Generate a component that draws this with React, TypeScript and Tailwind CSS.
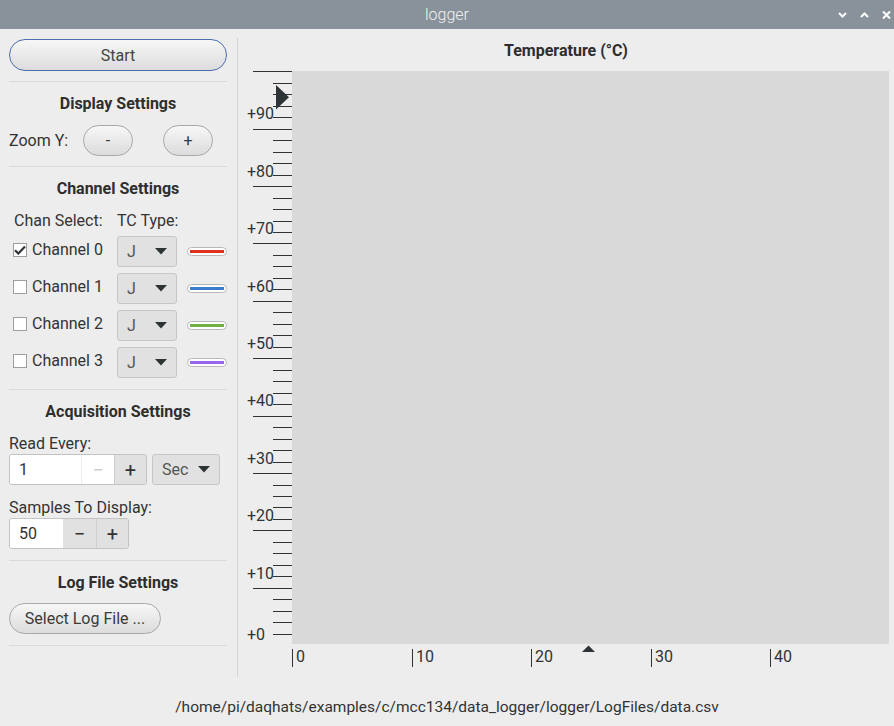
import React from "react";

const FONT = { fontFamily: "Roboto, 'Noto Sans', sans-serif" };

const Separator: React.FC<{ className?: string }> = ({ className = "" }) => (
  <div className={`h-px bg-[#d9d9d9] ${className}`} />
);

// leading 22 puts Roboto glyphs where GTK draws them
const SectionTitle: React.FC<{ children: React.ReactNode; className?: string }> = ({
  children,
  className = "",
}) => (
  <div className={`text-center text-[16px] leading-[22px] font-bold text-[#2e2e2e] ${className}`}>
    {children}
  </div>
);

const PillButton: React.FC<{ children: React.ReactNode; className?: string }> = ({
  children,
  className = "",
}) => (
  <button
    type="button"
    className={`h-[31px] rounded-full border border-[#a9a9a9] bg-gradient-to-b from-[#f7f7f7] to-[#dcdcdc] text-[16px] leading-[20px] text-[#3a3a3a] ${className}`}
  >
    {children}
  </button>
);

const Caret = () => (
  <svg width="12" height="7" viewBox="0 0 12 7">
    <path d="M0 0 L12 0 L6 6.5 Z" fill="#2e3436" />
  </svg>
);

const Combo: React.FC<{ value: string; className?: string }> = ({ value, className = "" }) => (
  <div
    className={`flex h-[31px] items-center justify-between rounded-[3px] border border-[#c6c6c6] bg-[#e1e1e1] pl-[9px] pr-[9px] text-[16px] text-[#555] ${className}`}
  >
    <span>{value}</span>
    <Caret />
  </div>
);

const channels = [
  { name: "Channel 0", color: "bg-[#e0301e]", checked: true },
  { name: "Channel 1", color: "bg-[#3b7dcc]", checked: false },
  { name: "Channel 2", color: "bg-[#72b043]", checked: false },
  { name: "Channel 3", color: "bg-[#9a66ee]", checked: false },
];

function ChannelRow({ name, color, checked }: { name: string; color: string; checked: boolean }) {
  return (
    <div className="flex h-[31px] items-center">
      <div className="flex h-[27px] items-center self-start">
        <div className="ml-[4px] flex h-[14px] w-[14px] items-center justify-center border border-[#9e9e9e] bg-white">
          {checked && (
            <svg width="12" height="10" viewBox="0 0 12 10">
              <path d="M1 5.2 L4.3 8.5 L11 1.5" fill="none" stroke="#2e3436" strokeWidth="2.2" />
            </svg>
          )}
        </div>
        <span className="ml-[5px] w-[85px] text-[16px] leading-[20px] text-[#333]">{name}</span>
      </div>
      <Combo value="J" className="w-[60px]" />
      <div className="ml-[10px] flex h-[9px] w-[40px] items-center rounded-full border border-[#b8b8b8] bg-white px-[2px]">
        <div className={`h-[3px] w-full ${color}`} />
      </div>
    </div>
  );
}

function LeftPanel() {
  return (
    <div className="flex w-[237px] flex-col pl-[9px] pr-[10px] pt-[10px] text-[#333]">
      <button
        type="button"
        className="h-[32px] w-[218px] rounded-full border border-[#4b6eaf] bg-gradient-to-b from-[#f7f7f7] to-[#dcdcdc] pt-[2px] text-[16px] text-[#444]"
      >
        Start
      </button>
      <Separator className="mt-[10px]" />
      <SectionTitle className="mt-[11px]">Display Settings</SectionTitle>
      <div className="mt-[10px] flex items-center">
        <span className="w-[74px] text-[16px] leading-[20px]">Zoom Y:</span>
        <PillButton className="w-[50px]">-</PillButton>
        <PillButton className="ml-[30px] w-[50px]">+</PillButton>
      </div>
      <Separator className="mt-[10px]" />
      <SectionTitle className="mt-[11px]">Channel Settings</SectionTitle>
      <div className="mt-[10px] flex text-[16px] leading-[22px]">
        <span className="ml-[5px] w-[103px]">Chan Select:</span>
        <span>TC Type:</span>
      </div>
      <div className="mt-[4px] flex flex-col gap-[6px]">
        {channels.map((c) => (
          <ChannelRow key={c.name} {...c} />
        ))}
      </div>
      <Separator className="mt-[11px]" />
      <SectionTitle className="mt-[11px]">Acquisition Settings</SectionTitle>
      <div className="mt-[10px] h-[21px] text-[16px] leading-[22px]">Read Every:</div>
      <div className="flex">
        <div className="flex h-[31px] w-[138px] overflow-hidden rounded-[3px] border border-[#c3c3c3] text-[16px]">
          <div className="flex w-[71px] items-center bg-white pl-[9px] text-[#333]">1</div>
          <div className="flex w-[33px] items-center justify-center border-l border-[#ececec] bg-white text-[20px] text-[#cfcfcf]">
            −
          </div>
          <div className="flex flex-1 items-center justify-center border-l border-[#cfcfcf] bg-[#e1e1e1] text-[20px] text-[#333]">
            +
          </div>
        </div>
        <Combo value="Sec" className="ml-[5px] w-[68px]" />
      </div>
      <div className="mt-[12px] h-[21px] text-[16px] leading-[22px]">Samples To Display:</div>
      <div className="flex h-[31px] w-[120px] overflow-hidden rounded-[3px] border border-[#c3c3c3] text-[16px]">
        <div className="flex w-[53px] items-center bg-white pl-[9px] text-[#333]">50</div>
        <div className="flex w-[33px] items-center justify-center bg-[#e1e1e1] text-[20px] text-[#333]">
          −
        </div>
        <div className="flex flex-1 items-center justify-center border-l border-[#cfcfcf] bg-[#e1e1e1] text-[20px] text-[#333]">
          +
        </div>
      </div>
      <Separator className="mt-[11px]" />
      <SectionTitle className="mt-[11px]">Log File Settings</SectionTitle>
      <PillButton className="mt-[9px] w-[152px] pt-[1px]">Select Log File ...</PillButton>
      <Separator className="mt-[11px]" />
    </div>
  );
}

// measured centres of the y labels, page coords
const yLabels = [
  { v: 90, c: 113 },
  { v: 80, c: 171 },
  { v: 70, c: 228 },
  { v: 60, c: 286 },
  { v: 50, c: 343 },
  { v: 40, c: 400 },
  { v: 30, c: 458 },
  { v: 20, c: 515 },
  { v: 10, c: 573 },
  { v: 0, c: 634 },
];

function Chart() {
  const ticks = Array.from({ length: 50 }, (_, i) => Math.round(0.3 + i * 11.478) + 0.5);
  const xTicks = [0, 10, 20, 30, 40];
  return (
    <svg width="656" height="609" viewBox="0 0 656 609" className="block">
      <rect x="54" y="0" width="597" height="573" fill="#d9d9d9" />
      {ticks.map((y, i) => (
        <line
          key={i}
          x1={i % 5 === 0 ? 15 : 35}
          x2="54"
          y1={y}
          y2={y}
          stroke="#2e3436"
          strokeWidth="1"
        />
      ))}
      {yLabels.map((l) => (
        <text key={l.v} x="9" y={l.c - 65} fontSize="16" fill="#2e3436" style={FONT}>
          +{l.v}
        </text>
      ))}
      {xTicks.map((v, k) => {
        const x = Math.round(54 + k * 119.5) + 0.5;
        return (
          <g key={v}>
            <line x1={x} x2={x} y1="578" y2="596" stroke="#2e3436" strokeWidth="1" />
            <text x={x + 3.5} y="590.5" fontSize="16" fill="#2e3436" style={FONT}>
              {v}
            </text>
          </g>
        );
      })}
      <path d="M38 14 L38 38.5 L51 26.2 Z" fill="#2e3436" />
      <path d="M344 581 L357 581 L350.5 574.5 Z" fill="#2e3436" />
    </svg>
  );
}

export default function App() {
  return (
    <div className="flex h-[726px] w-[894px] flex-col overflow-hidden bg-[#ededed]" style={FONT}>
      <div className="relative flex h-[29px] items-center justify-center bg-[#89929b]">
        <span className="text-[16px] font-light text-[#eef0f2]">logger</span>
        <div className="absolute right-[3px] top-0 flex h-[29px] items-center gap-[13px]">
          <svg width="9" height="6" viewBox="0 0 9 6">
            <path d="M1 1 L4.5 4.5 L8 1" fill="none" stroke="#fff" strokeWidth="2" />
          </svg>
          <svg width="9" height="6" viewBox="0 0 9 6">
            <path d="M1 5 L4.5 1.5 L8 5" fill="none" stroke="#fff" strokeWidth="2" />
          </svg>
          <svg width="9" height="8" viewBox="0 0 9 8">
            <path d="M1 0.5 L8 7.5 M8 0.5 L1 7.5" fill="none" stroke="#fff" strokeWidth="2" />
          </svg>
        </div>
      </div>
      <div className="flex h-[661px]">
        <LeftPanel />
        <div className="mb-[13px] mt-[9px] w-px bg-[#d4d4d4]" />
        <div className="flex flex-1 flex-col">
          <div className="h-[42px] pt-[11px] text-center text-[16px] leading-[22px] font-bold text-[#2e2e2e]">
            Temperature (°C)
          </div>
          <Chart />
        </div>
      </div>
      <div className="flex flex-1 items-center justify-center pb-[1px] text-[15.5px] text-[#333]">
        /home/pi/daqhats/examples/c/mcc134/data_logger/logger/LogFiles/data.csv
      </div>
    </div>
  );
}
